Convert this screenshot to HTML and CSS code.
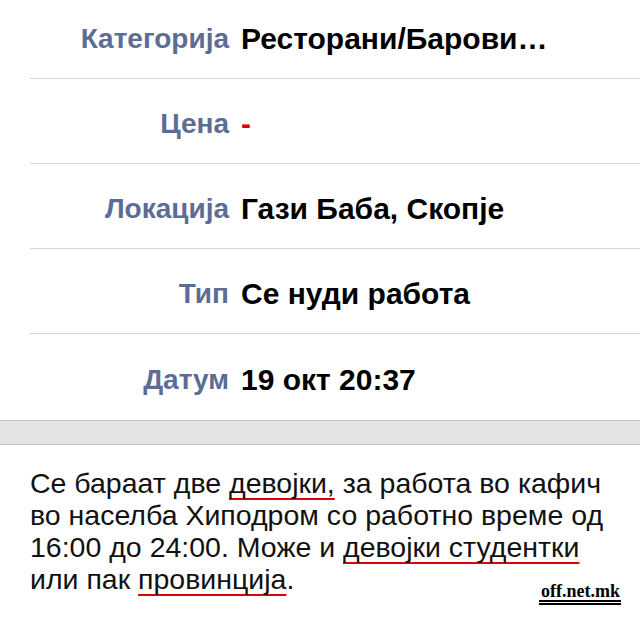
FILE: index.html
```
<!DOCTYPE html>
<html lang="mk">
<head>
  <meta charset="UTF-8" />
  <meta name="viewport" content="width=device-width, initial-scale=1" />
  <title>Оглас</title>
  <link rel="stylesheet" href="styles.css">
</head>
<body>

  <div class="details">
    <div class="detail-row first">
      <span class="detail-label">Категорија</span>
      <span class="detail-value">Ресторани/Барови…</span>
    </div>
    <div class="detail-row">
      <span class="detail-label">Цена</span>
      <span class="detail-value price">-</span>
    </div>
    <div class="detail-row">
      <span class="detail-label">Локација</span>
      <span class="detail-value">Гази Баба, Скопје</span>
    </div>
    <div class="detail-row">
      <span class="detail-label">Тип</span>
      <span class="detail-value">Се нуди работа</span>
    </div>
    <div class="detail-row last">
      <span class="detail-label">Датум</span>
      <span class="detail-value">19 окт 20:37</span>
    </div>
  </div>

  <div class="band"></div>

  <div class="description">
    <p class="ad-text">
      Се бараат две <span class="mark">девојки,</span> за работа во кафич<br>
      во населба Хиподром со работно време од<br>
      16:00 до 24:00. Може и <span class="mark">девојки студентки</span><br>
      или пак <span class="mark">провинција</span>.
    </p>
    <span class="watermark">off.net.mk</span>
  </div>

</body>
</html>
```

FILE: styles.css
```
body {
  margin: 0;
  min-height: 100vh;
  background: #fff;
  font-family: 'Liberation Sans', Arial, sans-serif;
  color: #000;
  overflow: hidden;
}
.details {
  padding-left: 30px;
}
.detail-row {
  display: flex;
  align-items: center;
  height: 78px;
  padding-top: 6px;
  border-bottom: 1px solid #d4d4d4;
}
.detail-row.first {
  height: 78px;
  padding-top: 0;
}
.detail-row.last {
  height: 80px;
  border-bottom: none;
}
.detail-label {
  width: 199px;
  text-align: right;
  font-size: 28px;
  font-weight: bold;
  color: #5b6d94;
}
.detail-value {
  margin-left: 12px;
  font-size: 30px;
  font-weight: bold;
  white-space: nowrap;
}
.detail-value.price {
  color: #e00000;
}
.band {
  height: 23px;
  background: #e3e3e3;
  border-top: 1px solid #c3c3c3;
  border-bottom: 1px solid #c3c3c3;
}
.description {
  position: relative;
  padding: 22px 30px 27px 30px;
}
.ad-text {
  margin: 0;
  font-size: 28.5px;
  line-height: 32px;
  color: #111;
  white-space: nowrap;
}
.mark {
  text-decoration: underline;
  text-decoration-color: #e00000;
  text-decoration-thickness: 2px;
  text-underline-offset: 5px;
  text-decoration-skip-ink: none;
}
.watermark {
  position: absolute;
  right: 19px;
  top: 137px;
  font-family: 'Liberation Serif', serif;
  font-weight: bold;
  font-size: 18px;
  line-height: 18px;
  padding: 0 1px 0 2px;
  border-bottom: 5px double #000;
}
```
